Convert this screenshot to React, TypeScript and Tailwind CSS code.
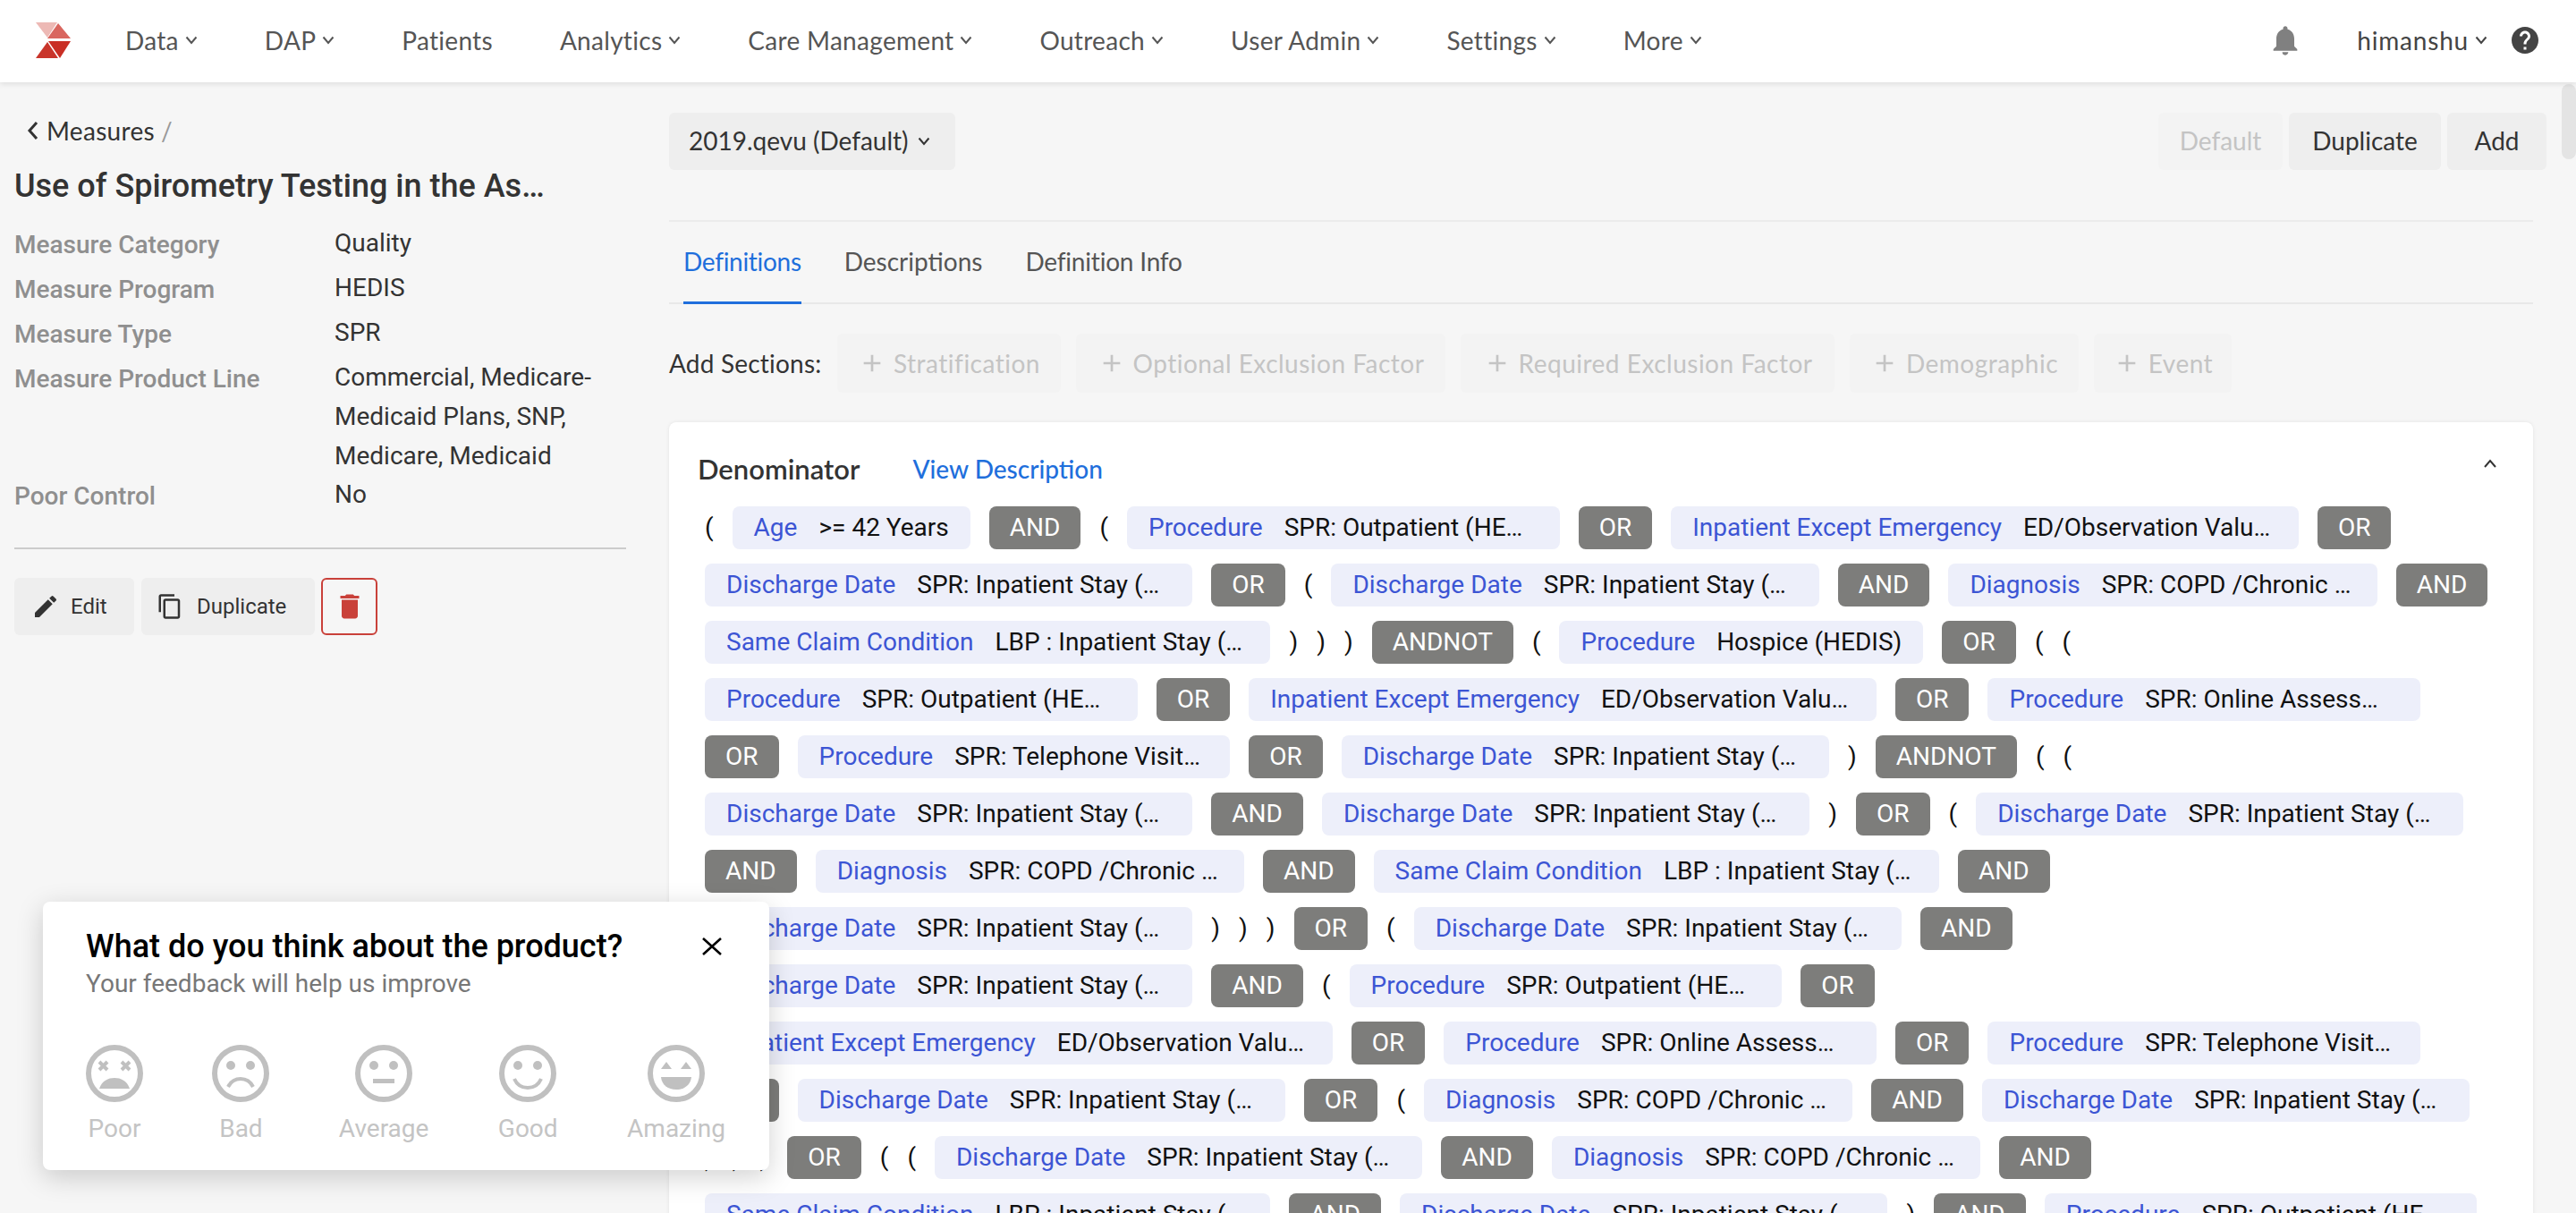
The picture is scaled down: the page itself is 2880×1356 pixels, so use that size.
import React from "react";
import { MdNotifications, MdHelp, MdEdit, MdContentCopy, MdDelete, MdAdd } from "react-icons/md";

const lato = "font-['Lato',sans-serif]";

function Chevron({ className = "" }: { className?: string }) {
  return (
    <svg width="14" height="10" viewBox="0 0 14 10" fill="none" className={className}>
      <path d="M1.5 1.5 7 8l5.5-6.5" stroke="currentColor" strokeWidth="2" />
    </svg>
  );
}

function Logo() {
  return (
    <svg width="40" height="40" viewBox="0 0 40 40">
      <polygon points="0,0 24,0 13,17" fill="#edb9b5" />
      <polygon points="25,1 39,18 13,18" fill="#d9665f" />
      <polygon points="14,21 39,21 27,40" fill="#c92f25" />
      <polygon points="13,22 25,40 0,40" fill="#c9352b" />
    </svg>
  );
}

const navItems: [string, boolean][] = [
  ["Data", true],
  ["DAP", true],
  ["Patients", false],
  ["Analytics", true],
  ["Care Management", true],
  ["Outreach", true],
  ["User Admin", true],
  ["Settings", true],
  ["More", true],
];

type Item =
  | { t: "c"; l: string; v: string }
  | { t: "o"; v: string }
  | { t: "p"; v: string };

const c = (l: string, v: string): Item => ({ t: "c", l, v });
const o = (v: string): Item => ({ t: "o", v });
const p = (v: string): Item => ({ t: "p", v });

const ds = () => c("Discharge Date", "SPR: Inpatient Stay (HEDIS) Value Set");
const dx = () => c("Diagnosis", "SPR: COPD /Chronic Bronchitis Value Set");
const pr = () => c("Procedure", "SPR: Outpatient (HEDIS) Value Set");
const ie = () => c("Inpatient Except Emergency", "ED/Observation Value Set List");
const on = () => c("Procedure", "SPR: Online Assessments Value Set");
const tv = () => c("Procedure", "SPR: Telephone Visits Value Set");
const sc = () => c("Same Claim Condition", "LBP : Inpatient Stay (HEDIS) Value");

const items: Item[] = [
  p("("), c("Age", ">= 42 Years"), o("AND"), p("("), pr(), o("OR"), ie(), o("OR"),
  ds(), o("OR"), p("("), ds(), o("AND"), dx(), o("AND"),
  sc(), p(")"), p(")"), p(")"), o("ANDNOT"), p("("), c("Procedure", "Hospice (HEDIS)"), o("OR"), p("("), p("("),
  pr(), o("OR"), ie(), o("OR"), on(),
  o("OR"), tv(), o("OR"), ds(), p(")"), o("ANDNOT"), p("("), p("("),
  ds(), o("AND"), ds(), p(")"), o("OR"), p("("), ds(),
  o("AND"), dx(), o("AND"), sc(), o("AND"),
  ds(), p(")"), p(")"), p(")"), o("OR"), p("("), ds(), o("AND"),
  ds(), o("AND"), p("("), pr(), o("OR"),
  ie(), o("OR"), on(), o("OR"), tv(),
  o("OR"), ds(), o("OR"), p("("), dx(), o("AND"), ds(),
  p(")"), p(")"), p(")"), o("OR"), p("("), p("("), ds(), o("AND"), dx(), o("AND"),
  sc(), o("AND"), ds(), p(")"), o("AND"), pr(),
];

function Token({ item }: { item: Item }) {
  if (item.t === "p") return <span className="h-12 leading-[48px] text-[28px] text-[#111]">{item.v}</span>;
  if (item.t === "o")
    return <span className="h-12 leading-[48px] px-[23px] rounded-lg bg-[#7d7d7b] text-white text-[28px]">{item.v}</span>;
  return (
    <span className="h-12 leading-[48px] px-6 rounded-lg bg-[#edeffa] text-[28px] flex gap-6">
      <span className="text-[#3c55d4] whitespace-nowrap">{item.l}</span>
      <span className="text-[#111] truncate max-w-[284px]">{item.v}</span>
    </span>
  );
}

const meta: [string, string, string][] = [
  ["Measure Category", "Quality", ""],
  ["Measure Program", "HEDIS", ""],
  ["Measure Type", "SPR", ""],
  ["Measure Product Line", "Commercial, Medicare-Medicaid Plans, SNP, Medicare, Medicaid", ""],
  ["Poor Control", "No", "-mt-[7px]"],
];

function Face({ kind }: { kind: number }) {
  const g = "#c0c0c0";
  return (
    <svg width="64" height="64" viewBox="0 0 64 64" fill="none">
      <circle cx="32" cy="32" r="29" stroke={g} strokeWidth="6" />
      {kind === 0 && (
        <>
          <path d="M15 19l9 9m0-9-9 9M40 19l9 9m0-9-9 9" stroke={g} strokeWidth="4" />
          <path d="M15 49c3-9 10-12 17-12s14 3 17 12z" fill={g} />
        </>
      )}
      {kind === 1 && (
        <>
          <circle cx="21" cy="23" r="5" fill={g} />
          <circle cx="43" cy="23" r="5" fill={g} />
          <path d="M18 47c3-6 8-9 14-9s11 3 14 9" stroke={g} strokeWidth="4" />
        </>
      )}
      {kind === 2 && (
        <>
          <circle cx="21" cy="23" r="5" fill={g} />
          <circle cx="43" cy="23" r="5" fill={g} />
          <rect x="20" y="38" width="24" height="5" fill={g} />
        </>
      )}
      {kind === 3 && (
        <>
          <circle cx="21" cy="23" r="5" fill={g} />
          <circle cx="43" cy="23" r="5" fill={g} />
          <path d="M17 38c3 7 8 10 15 10s12-3 15-10" stroke={g} strokeWidth="4" />
        </>
      )}
      {kind === 4 && (
        <>
          <path d="M15 27l6-8 6 8zM37 27l6-8 6 8z" fill={g} />
          <path d="M15 36h34c-1 9-8 14-17 14s-16-5-17-14z" fill={g} />
        </>
      )}
    </svg>
  );
}

const faces = ["Poor", "Bad", "Average", "Good", "Amazing"];
const sections: [string, string][] = [
  ["Stratification", "w-[250px]"],
  ["Optional Exclusion Factor", "w-[413px]"],
  ["Required Exclusion Factor", "w-[418px]"],
  ["Demographic", "w-[256px]"],
  ["Event", "w-[154px]"],
];

export default function App() {
  return (
    <div className="relative h-[1356px] w-[2880px] overflow-hidden bg-[#f6f6f6] font-['Roboto',sans-serif] flex flex-col">
      <header className={`relative z-10 h-[92px] shrink-0 bg-white shadow-[0_2px_6px_rgba(0,0,0,0.1)] flex items-center pl-10 pr-[39px] pb-[3px] text-[28px] text-[#555] ${lato}`}>
        <Logo />
        <nav className="ml-[60px] flex items-center gap-[75px] tracking-[0.3px]">
          {navItems.map(([n, ch]) => (
            <span key={n} className="flex items-center gap-[7px]">
              {n}
              {ch && <Chevron />}
            </span>
          ))}
        </nav>
        <div className="ml-auto flex items-center">
          <MdNotifications className="text-[#808080] text-[40px]" />
          <span className="ml-[60px] flex items-center gap-[7px] text-[#444] tracking-[0.8px]">
            himanshu
            <Chevron />
          </span>
          <MdHelp className="ml-[24px] text-[#444] text-[36px]" />
        </div>
      </header>

      <div className="relative flex-1 flex min-h-0">
        <aside className="w-[748px] shrink-0 pl-4 pr-[48px] pt-[34px]">
          <div className={`flex items-center text-[28px] tracking-[0.3px] text-[#333] ml-[14px] h-10 ${lato}`}>
            <svg width="14" height="22" viewBox="0 0 14 22" fill="none" className="mr-[8px]">
              <path d="M11 2 3 11l8 9" stroke="#333" strokeWidth="3" />
            </svg>
            Measures<span className="ml-[7px] text-[#999]">/</span>
          </div>
          <h1 className="mt-[20px] h-11 leading-[44px] text-[36px] font-medium text-[#333] w-[600px] truncate">
            Use of Spirometry Testing in the Assessment and Diagnosis
          </h1>
          <dl className="mt-[20px] flex flex-col gap-[6px]">
            {meta.map(([k, v, cls]) => (
              <div key={k} className={`flex ${cls}`}>
                <dt className="w-[358px] shrink-0 translate-y-[2px] text-[28px] leading-[44px] font-medium text-[#8f8f8f]">{k}</dt>
                <dd className="text-[28px] leading-[44px] text-[#333]">{v}</dd>
              </div>
            ))}
          </dl>
          <div className="mt-[37px] h-[2px] bg-[#ccc]" />
          <div className="mt-8 flex items-center text-[24px] text-[#333]">
            <button className="h-16 w-[134px] rounded-md bg-[#eee] flex items-center pl-[19px] gap-[12px]">
              <MdEdit className="text-[32px]" />
              Edit
            </button>
            <button className="ml-2 h-16 w-[194px] rounded-md bg-[#eee] flex items-center pl-[17px] gap-[15px]">
              <MdContentCopy className="text-[30px]" />
              Duplicate
            </button>
            <button className="ml-[7px] h-16 w-[63px] rounded-md border-2 border-[#c9413a] flex items-center justify-center">
              <MdDelete className="text-[36px] text-[#c9413a]" />
            </button>
          </div>
        </aside>

        <main className="w-[2084px] shrink-0 pt-[34px] relative">
          <div className="flex justify-between w-[2099px] h-16">
            <button className="h-16 w-[320px] rounded-md bg-[#eee] flex items-center pl-[22px] gap-[10px] text-[28px] text-[#333]">
              <span className={`pb-[2px] ${lato}`}>2019.qevu (Default)</span>
              <Chevron />
            </button>
            <div className={`flex gap-[7px] text-[28px] ${lato}`}>
              <button className="h-16 w-[139px] pb-[3px] rounded-md bg-[#f3f3f3] text-[#c4c4c4]">Default</button>
              <button className="h-16 w-[170px] pb-[3px] rounded-md bg-[#eee] text-[#333]">Duplicate</button>
              <button className="h-16 w-[111px] pb-[3px] rounded-md bg-[#eee] text-[#333]">Add</button>
            </div>
          </div>
          <div className="mt-14 h-[2px] bg-[#ececec]" />
          <div className={`mt-[21px] h-[71px] border-b-2 border-[#e8e8e8] flex gap-[48px] pl-4 text-[28px] text-[#555] ${lato}`}>
            <span className="h-[71px] border-b-[3px] border-[#1f6fdc] text-[#1f6fdc] leading-[46px] tracking-[-0.3px]">Definitions</span>
            <span className="leading-[46px]">Descriptions</span>
            <span className="leading-[46px] tracking-[-0.2px]">Definition Info</span>
          </div>
          <div className="mt-[33px] flex items-center h-[66px] text-[28px]">
            <span className={`w-[188px] tracking-[0.2px] text-[#333] ${lato}`}>Add Sections:</span>
            <div className={`flex gap-[17px] text-[#c4c4c4] ${lato}`}>
              {sections.map(([s, w]) => (
                <span key={s} className={`h-[66px] ${w} rounded-md bg-[#f3f3f3] flex items-center justify-center gap-[8px] tracking-[0.5px]`}>
                  <MdAdd className="text-[32px]" />
                  {s}
                </span>
              ))}
            </div>
          </div>
          <section className="mt-[33px] rounded-lg bg-white shadow-[0_0_4px_rgba(0,0,0,0.08)] pl-10 pr-[44px] pt-[28px] h-[900px]">
            <div className={`relative flex items-center h-12 -ml-2 ${lato}`}>
              <span className="text-[31px] font-semibold text-[#333]">Denominator</span>
              <span className="ml-[59px] text-[28px] font-medium text-[#1f6fdc]">View Description</span>
              <svg width="18" height="12" viewBox="0 0 18 12" fill="none" className="absolute right-[-5px] top-[12px] text-[#333]">
                <path d="M3 10 9 3l6 7" stroke="currentColor" strokeWidth="2" />
              </svg>
            </div>
            <div className="mt-[18px] flex flex-wrap gap-x-[21px] gap-y-4">
              {items.map((it, i) => (
                <Token key={i} item={it} />
              ))}
            </div>
          </section>
        </main>

        <div className="ml-auto w-[16px] h-[84px] mt-[2px] rounded-full bg-[#e4e4e4]" />
      </div>

      <div className="absolute z-20 left-12 top-[1008px] w-[812px] h-[300px] rounded-lg bg-white shadow-[0_8px_30px_rgba(0,0,0,0.18)] pl-12 pr-[49px] pt-[27px]">
        <div className="flex justify-between items-start">
          <div>
            <div className="text-[36px] leading-[46px] font-medium text-black">What do you think about the product?</div>
            <div className="mt-[1px] text-[28px] leading-[36px] text-[#777]">Your feedback will help us improve</div>
          </div>
          <svg width="22" height="20" viewBox="0 0 22 20" fill="none" className="mt-[13px] mr-[4px] text-black">
            <path d="M1 1l20 18M21 1 1 19" stroke="currentColor" strokeWidth="2.6" />
          </svg>
        </div>
        <div className="mt-[50px] flex justify-between">
          {faces.map((f, i) => (
            <div key={f} className="flex flex-col items-center">
              <Face kind={i} />
              <span className="mt-[12px] text-[28px] leading-9 text-[#c4c4c4]">{f}</span>
            </div>
          ))}
        </div>
      </div>
    </div>
  );
}
